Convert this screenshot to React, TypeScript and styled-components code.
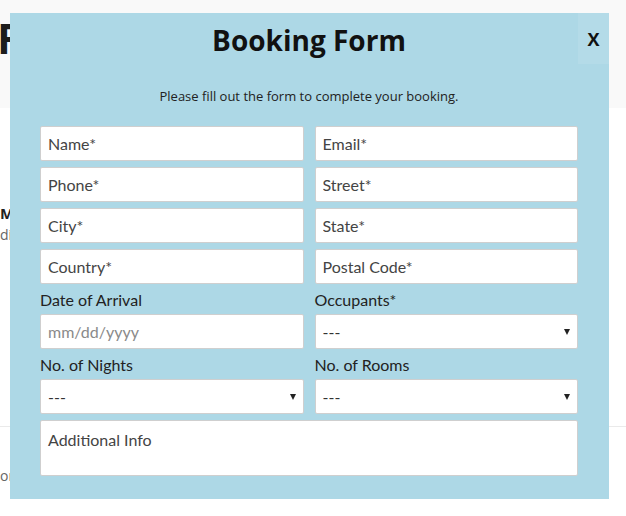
import styled, { createGlobalStyle } from 'styled-components';

const GlobalStyle = createGlobalStyle`
  html, body {
    margin: 0;
    padding: 0;
    background: #ffffff;
  }
  body {
    font-family: 'Open Sans', 'Liberation Sans', sans-serif;
    overflow: hidden;
  }
  * {
    box-sizing: border-box;
  }
`;

const Page = styled.div`
  position: relative;
  width: 626px;
  height: 516px;
  overflow: hidden;
`;

const Hero = styled.header`
  height: 108px;
  background: #f9f9f9;
  padding-top: 12px;
`;

const HeroTitle = styled.h1`
  margin: 0 0 0 -3px;
  font-family: 'Open Sans', sans-serif;
  font-weight: 700;
  font-size: 42px;
  line-height: 52px;
  color: #1d1d1d;
  white-space: nowrap;
`;

const Section = styled.section`
  padding-top: 94px;
  height: 319px;
  border-bottom: 1px solid #eaeaea;
`;

const SectionHeading = styled.h3`
  margin: 0;
  font-family: 'Open Sans', sans-serif;
  font-weight: 700;
  font-size: 15px;
  line-height: 22px;
  color: #222;
  white-space: nowrap;
`;

const SectionText = styled.p`
  margin: 0;
  font-family: 'Open Sans', sans-serif;
  font-size: 14px;
  line-height: 22px;
  color: #666;
  white-space: nowrap;
`;

const Footer = styled.p`
  margin: 38px 0 0;
  font-family: 'Open Sans', sans-serif;
  font-size: 14px;
  line-height: 22px;
  color: #666;
  white-space: nowrap;
`;

const Modal = styled.div`
  position: absolute;
  left: 10px;
  top: 13px;
  width: 599px;
  background: #add8e6;
  padding: 8px 31px 23px 30px;
`;

const CloseButton = styled.button`
  position: absolute;
  top: 0;
  right: 0;
  width: 31px;
  height: 51px;
  border: none;
  padding: 0;
  background: #b4dbe8;
  font-family: 'Open Sans', sans-serif;
  font-weight: 700;
  font-size: 18px;
  color: #111;
  cursor: pointer;
`;

const Title = styled.h2`
  margin: 0;
  text-align: center;
  font-family: 'Open Sans', sans-serif;
  font-weight: 700;
  font-size: 28px;
  line-height: 38px;
  color: #111;
`;

const Subtitle = styled.p`
  margin: 28px 0 21px;
  text-align: center;
  font-family: 'Open Sans', sans-serif;
  font-size: 13px;
  line-height: 18px;
  color: #222;
`;

const Grid = styled.form`
  display: grid;
  grid-template-columns: 1fr 1fr;
  column-gap: 11px;
  row-gap: 6px;
`;

const Field = styled.div<{ $wide?: boolean }>`
  display: flex;
  flex-direction: column;
  grid-column: ${(p) => (p.$wide ? '1 / -1' : 'auto')};
`;

const Label = styled.label`
  font-family: 'Lato', 'Liberation Sans', sans-serif;
  font-size: 16px;
  line-height: 20px;
  color: #222;
  margin-bottom: 4px;
`;

const Input = styled.input<{ $faint?: boolean }>`
  width: 100%;
  height: 35px;
  border: 1px solid #cfcfcf;
  border-radius: 2px;
  background: #fff;
  padding: 0 7px;
  font-family: 'Lato', 'Liberation Sans', sans-serif;
  font-size: 16px;
  color: #333;
  outline: none;

  &::placeholder {
    color: ${(p) => (p.$faint ? '#8a8a8a' : '#444')};
    opacity: 1;
  }
`;

const SelectWrap = styled.div`
  position: relative;

  &::after {
    content: '';
    position: absolute;
    right: 8px;
    top: 15px;
    border-left: 3px solid transparent;
    border-right: 3px solid transparent;
    border-top: 6px solid #222;
    pointer-events: none;
  }
`;

const Select = styled.select`
  appearance: none;
  width: 100%;
  height: 35px;
  border: 1px solid #cfcfcf;
  border-radius: 2px;
  background: #fff;
  padding: 0 7px;
  font-family: 'Lato', 'Liberation Sans', sans-serif;
  font-size: 16px;
  color: #333;
  outline: none;
`;

const TextArea = styled.textarea`
  width: 100%;
  height: 56px;
  border: 1px solid #cfcfcf;
  border-radius: 2px;
  background: #fff;
  padding: 9px 7px;
  font-family: 'Lato', 'Liberation Sans', sans-serif;
  font-size: 16px;
  line-height: 20px;
  color: #333;
  resize: none;
  outline: none;
  display: block;

  &::placeholder {
    color: #444;
    opacity: 1;
  }
`;

const textFields = [
  'Name*',
  'Email*',
  'Phone*',
  'Street*',
  'City*',
  'State*',
  'Country*',
  'Postal Code*',
];

function Dropdown({ label }: { label: string }) {
  return (
    <Field>
      <Label>{label}</Label>
      <SelectWrap>
        <Select defaultValue="">
          <option value="">---</option>
          <option value="1">1</option>
          <option value="2">2</option>
          <option value="3">3</option>
        </Select>
      </SelectWrap>
    </Field>
  );
}

export default function App() {
  return (
    <>
      <GlobalStyle />
      <Page>
        <Hero>
          <HeroTitle>Find</HeroTitle>
        </Hero>
        <Section>
          <SectionHeading>Make a Reservation</SectionHeading>
          <SectionText>discover our rooms and suites</SectionText>
        </Section>
        <Footer>or call us anytime.</Footer>

        <Modal role="dialog">
          <CloseButton type="button">X</CloseButton>
          <Title>Booking Form</Title>
          <Subtitle>Please fill out the form to complete your booking.</Subtitle>
          <Grid>
            {textFields.map((name) => (
              <Field key={name}>
                <Input type="text" placeholder={name} />
              </Field>
            ))}
            <Field>
              <Label>Date of Arrival</Label>
              <Input type="text" placeholder="mm/dd/yyyy" $faint />
            </Field>
            <Dropdown label="Occupants*" />
            <Dropdown label="No. of Nights" />
            <Dropdown label="No. of Rooms" />
            <Field $wide>
              <TextArea placeholder="Additional Info" />
            </Field>
          </Grid>
        </Modal>
      </Page>
    </>
  );
}
